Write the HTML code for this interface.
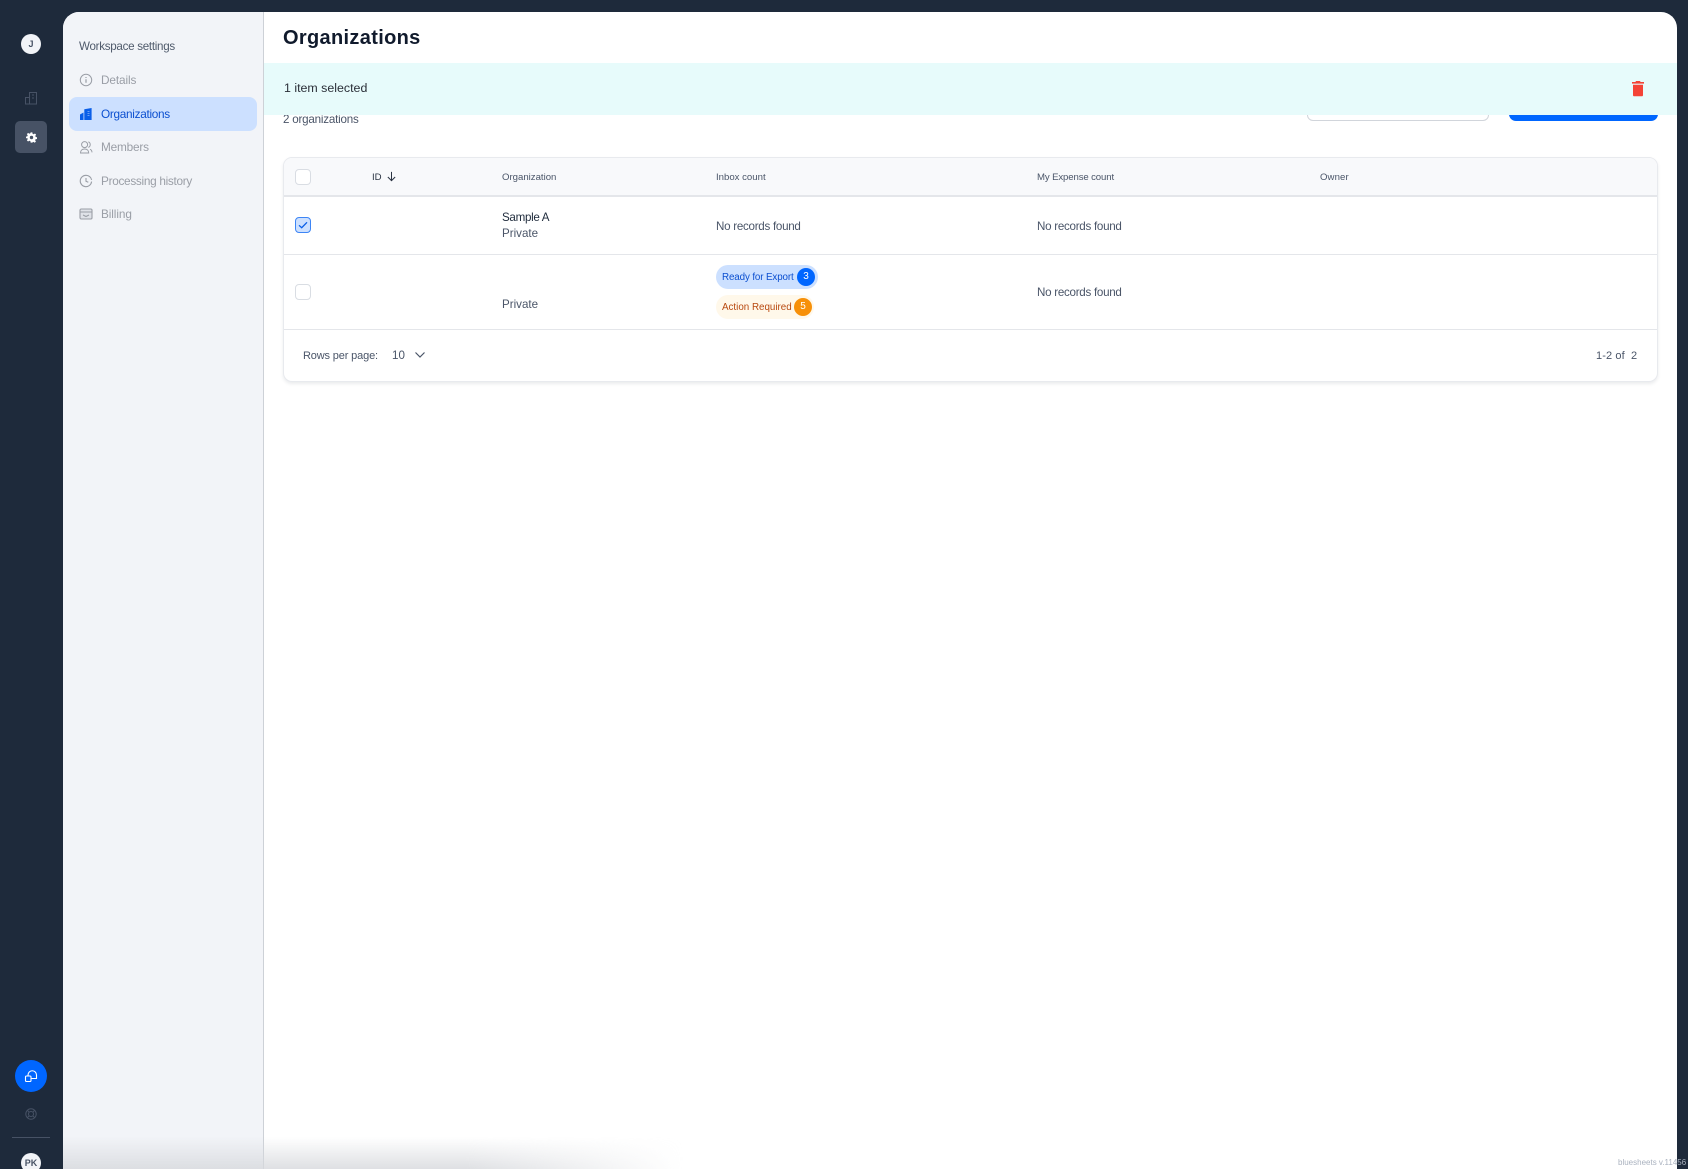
<!DOCTYPE html>
<html lang="en">
<head>
<meta charset="utf-8">
<title>Organizations</title>
<style>
html,body{margin:0;padding:0;width:1688px;height:1169px;overflow:hidden;background:#1e2a3b}
#root{position:relative;width:1688px;height:1169px;overflow:hidden;background:#1e2a3b;font-family:"Liberation Sans",sans-serif}
.a{position:absolute}
.t{position:absolute;white-space:nowrap;line-height:16px;height:16px}
svg{position:absolute;display:block}
#panel{left:63px;top:12px;width:1614px;height:1157px;background:#fff;border-radius:16px 16px 0 0;overflow:hidden}
#side{left:63px;top:12px;width:200px;height:1157px;background:#f2f4f8;border-right:1px solid #cdd1d7;border-radius:16px 0 0 0}
#shade{left:63px;top:1137px;width:620px;height:32px;background:linear-gradient(to bottom,rgba(225,227,231,0),rgba(214,216,220,.8));-webkit-mask-image:linear-gradient(to right,#000 65%,transparent);mask-image:linear-gradient(to right,#000 65%,transparent)}
.nav{font-size:11.8px;color:#9a9ea6}
.cell{font-size:11.6px;color:#4a5568}
.nr{letter-spacing:-.27px}
.th{font-size:9.6px;color:#4a5568}
.cb{position:absolute;box-sizing:border-box;width:16px;height:16px;border:1px solid #d9dde3;border-radius:4px;background:#fff}
.avatar{position:absolute;width:20px;height:20px;border-radius:50%;background:#f2f4f8;color:#475265;font-weight:700;font-size:9px;line-height:20px;text-align:center}
.badge{position:absolute;height:24px;border-radius:12px}
.num{position:absolute;width:18px;height:18px;border-radius:50%;color:#fff;font-size:10px;line-height:18px;text-align:center}
</style>
</head>
<body>
<div id="root">
<div class="a" id="panel"></div>
<div class="a" id="side"></div>
<div class="a" id="shade"></div>

<!-- dark rail -->
<div class="avatar" style="left:21px;top:34px">J</div>
<svg style="left:24px;top:91px" width="14" height="14" viewBox="0 0 14 14" fill="none" stroke="#475265" stroke-width="1"><path d="M1.500 13V6.500h4V13zM5.500 13V1.500h7V13zM1 13h12M8 4h2M8 7h2"/></svg>
<div class="a" style="left:15px;top:121px;width:32px;height:32px;border-radius:5px;background:#475265"></div>
<svg style="left:25.500px;top:131.500px" width="11" height="11" viewBox="-1 -1 26 26"><path fill="#fff" fill-rule="evenodd" d="M10 0h4l.7 3.400 2.500 1 2.900-1.900 2.800 2.800-1.900 2.900 1 2.500 3 .7v4l-3.400.7-1 2.500 1.900 2.900-2.800 2.800-2.900-1.900-2.500 1L14 24h-4l-.7-3.400-2.500-1-2.900 1.900-2.800-2.800 1.900-2.900-1-2.500L-1 14v-4l3-.7 1-2.500-1.900-2.900 2.800-2.800 2.900 1.900 2.500-1zM12 8a4 4 0 1 0 0 8 4 4 0 0 0 0-8z"/></svg>
<div class="a" style="left:15px;top:1060px;width:32px;height:32px;border-radius:50%;background:#0066ff"></div>
<svg style="left:24px;top:1069px" width="14" height="14" viewBox="0 0 14 14" fill="none" stroke="#fff" stroke-width="1.100"><rect x="1.500" y="7" width="5.500" height="5.500" rx="1"/><path d="M4 7V6a4 4 0 0 1 8.500 0v3.500H7"/></svg>
<svg style="left:25px;top:1108px" width="12" height="12" viewBox="0 0 12 12" fill="none" stroke="#475265" stroke-width="1"><circle cx="6" cy="6" r="5.200"/><circle cx="6" cy="6" r="2.500"/><path d="M2.400 2.400l1.800 1.800M9.600 2.400L7.800 4.200M2.400 9.600l1.800-1.800M9.600 9.600L7.800 7.800"/></svg>
<div class="a" style="left:12px;top:1137px;width:38px;height:1px;background:#475265"></div>
<div class="avatar" style="left:21px;top:1153px">PK</div>

<!-- settings nav -->
<div class="t" style="left:79px;top:38.500px;font-size:11.600px;letter-spacing:-.28px;color:#4f5a6b">Workspace settings</div>
<div class="a" style="left:69px;top:97px;width:188px;height:34px;border-radius:8px;background:#cce0ff"></div>

<svg style="left:79px;top:73px" width="14" height="14" viewBox="0 0 14 14" fill="none" stroke="#9a9ea6" stroke-width="1"><circle cx="7" cy="7" r="5.700"/><path d="M7 6.300v3.400M7 4v1" stroke-width="1.200"/></svg>
<div class="t nav" style="left:101px;top:72px;letter-spacing:-.1px">Details</div>

<svg style="left:80px;top:108px" width="12" height="12" viewBox="0 0 12 12"><path fill="#0a5fe8" d="M0 12V6.500L3.500 4.500V12zM4.300 12V1.200L11.600 0V12z"/><path stroke="#cce0ff" stroke-width=".6" d="M7.500 3.500h2M7.500 5.500h2M7.500 7.500h2"/></svg>
<div class="t nav" style="left:101px;top:106px;color:#0b4fd0;letter-spacing:-.3px">Organizations</div>

<svg style="left:79px;top:140px" width="14" height="14" viewBox="0 0 14 14" fill="none" stroke="#9a9ea6" stroke-width="1"><circle cx="5.600" cy="4.600" r="3"/><path d="M9.300 1.800a3 3 0 0 1 0 5.600M1.500 13c0-2.600 1.800-4 4.100-4s4.100 1.400 4.100 4zM11 9.300c1.300.5 2 1.600 2 3.100"/></svg>
<div class="t nav" style="left:101px;top:139px;letter-spacing:-.2px">Members</div>

<svg style="left:79px;top:174px" width="14" height="14" viewBox="0 0 14 14" fill="none" stroke="#9a9ea6" stroke-width="1.100"><path d="M12.600 7.600A5.700 5.700 0 1 1 7 1.300a5.700 5.700 0 0 1 5.600 4.600M7 4v3.300l2.300 1"/></svg>
<div class="t nav" style="left:101px;top:173px;letter-spacing:-.3px">Processing history</div>

<svg style="left:79px;top:207px" width="14" height="14" viewBox="0 0 14 14" fill="none" stroke="#9a9ea6" stroke-width="1.100"><rect x="1" y="2" width="12" height="10" rx="1.200" fill="#dfe2e8"/><path d="M1 5h12M4 8l3 1.500L10 8"/></svg>
<div class="t nav" style="left:101px;top:206px;letter-spacing:-.1px">Billing</div>

<!-- main -->
<div class="t" style="left:283px;top:26px;height:24px;line-height:24px;font-size:20px;font-weight:700;letter-spacing:.33px;color:#101a2c">Organizations</div>
<div class="t" style="left:283px;top:112px;font-size:11.600px;letter-spacing:-.2px;color:#4a5568">2 organizations</div>
<div class="a" style="left:1307px;top:100px;width:182px;height:21px;box-sizing:border-box;border:1px solid #d1d5db;border-radius:6px;background:#fff"></div>
<div class="a" style="left:1509px;top:100px;width:149px;height:21px;border-radius:7px;background:#0066ff"></div>

<div class="a" style="left:264px;top:63px;width:1413px;height:52px;background:#e7fbfb"></div>
<div class="t" style="left:284px;top:80px;font-size:12.400px;color:#2a2f38">1 item selected</div>
<svg style="left:1631px;top:80px" width="14" height="17" viewBox="0 0 14 17"><path fill="#f44336" d="M5 1h4l.6 1H13v1.600H1V2h3.400zM2 4.800h10V15a1.300 1.300 0 0 1-1.300 1.300H3.300A1.300 1.300 0 0 1 2 15z"/></svg>

<!-- table -->
<div class="a" style="left:283px;top:157px;width:1375px;height:225px;box-sizing:border-box;border:1px solid #e8eaee;border-radius:9px;background:#fff;box-shadow:0 2px 3px rgba(60,70,90,.10);overflow:hidden">
  <div class="a" style="left:0;top:0;width:100%;height:37px;background:#f8f9fb;border-bottom:2px solid #e4e6ea"></div>
  <div class="a" style="left:0;top:96px;width:100%;height:1px;background:#e4e6ea"></div>
  <div class="a" style="left:0;top:171px;width:100%;height:1px;background:#e4e6ea"></div>
</div>

<div class="cb" style="left:295px;top:169px"></div>
<div class="t th" style="left:372px;top:169.500px;color:#2a3342">ID</div>
<svg style="left:386px;top:171px" width="11" height="11" viewBox="0 0 11 12" fill="none" stroke="#2a3342" stroke-width="1.100"><path d="M5.500 1v9.500M1.500 6.500l4 4 4-4"/></svg>
<div class="t th" style="left:502px;top:170px">Organization</div>
<div class="t th" style="left:716px;top:170px">Inbox count</div>
<div class="t th" style="left:1037px;top:170px;letter-spacing:-.12px">My Expense count</div>
<div class="t th" style="left:1320px;top:170px;letter-spacing:.1px">Owner</div>

<div class="cb" style="left:295px;top:217px;background:#cce0ff;border:1.500px solid #3d85f5"></div>
<svg style="left:298px;top:220px" width="10" height="10" viewBox="0 0 10 10" fill="none" stroke="#0a5fe8" stroke-width="1.300"><path d="M1 5.300l2.700 2.400L9 2.300"/></svg>
<div class="t cell" style="left:502px;top:209.500px;color:#1e2a3b;letter-spacing:-.3px">Sample A</div>
<div class="t cell" style="left:502px;top:226px">Private</div>
<div class="t cell nr" style="left:716px;top:218.500px">No records found</div>
<div class="t cell nr" style="left:1037px;top:218.500px">No records found</div>

<div class="cb" style="left:295px;top:284px"></div>
<div class="t cell" style="left:502px;top:297px">Private</div>
<div class="badge" style="left:716px;top:265px;width:102px;background:#cce0ff"></div>
<div class="t" style="left:722px;top:269.500px;font-size:9.800px;letter-spacing:-.12px;color:#0b4fd0">Ready for Export</div>
<div class="num" style="left:797px;top:268px;background:#0066ff">3</div>
<div class="badge" style="left:716px;top:295px;width:98px;background:#fff8ea"></div>
<div class="t" style="left:722px;top:299.500px;font-size:9.800px;color:#b8480f">Action Required</div>
<div class="num" style="left:794px;top:298px;background:#f79009">5</div>
<div class="t cell nr" style="left:1037px;top:284.500px">No records found</div>

<div class="t cell" style="left:303px;top:347.500px;font-size:11px;letter-spacing:-.15px">Rows per page:</div>
<div class="t cell" style="left:392px;top:347.500px">10</div>
<svg style="left:414px;top:350px" width="12" height="10" viewBox="0 0 12 10" fill="none" stroke="#4a5568" stroke-width="1.200"><path d="M1.500 2.500L6 7l4.500-4.500"/></svg>
<div class="t cell" style="left:1596px;top:347.500px;font-size:11px;letter-spacing:.1px">1-2 of&nbsp; 2</div>

<div class="t" style="left:1618px;top:1155px;font-size:8px;color:#aab2bf">bluesheets v.11456</div>
</div>
</body>
</html>
